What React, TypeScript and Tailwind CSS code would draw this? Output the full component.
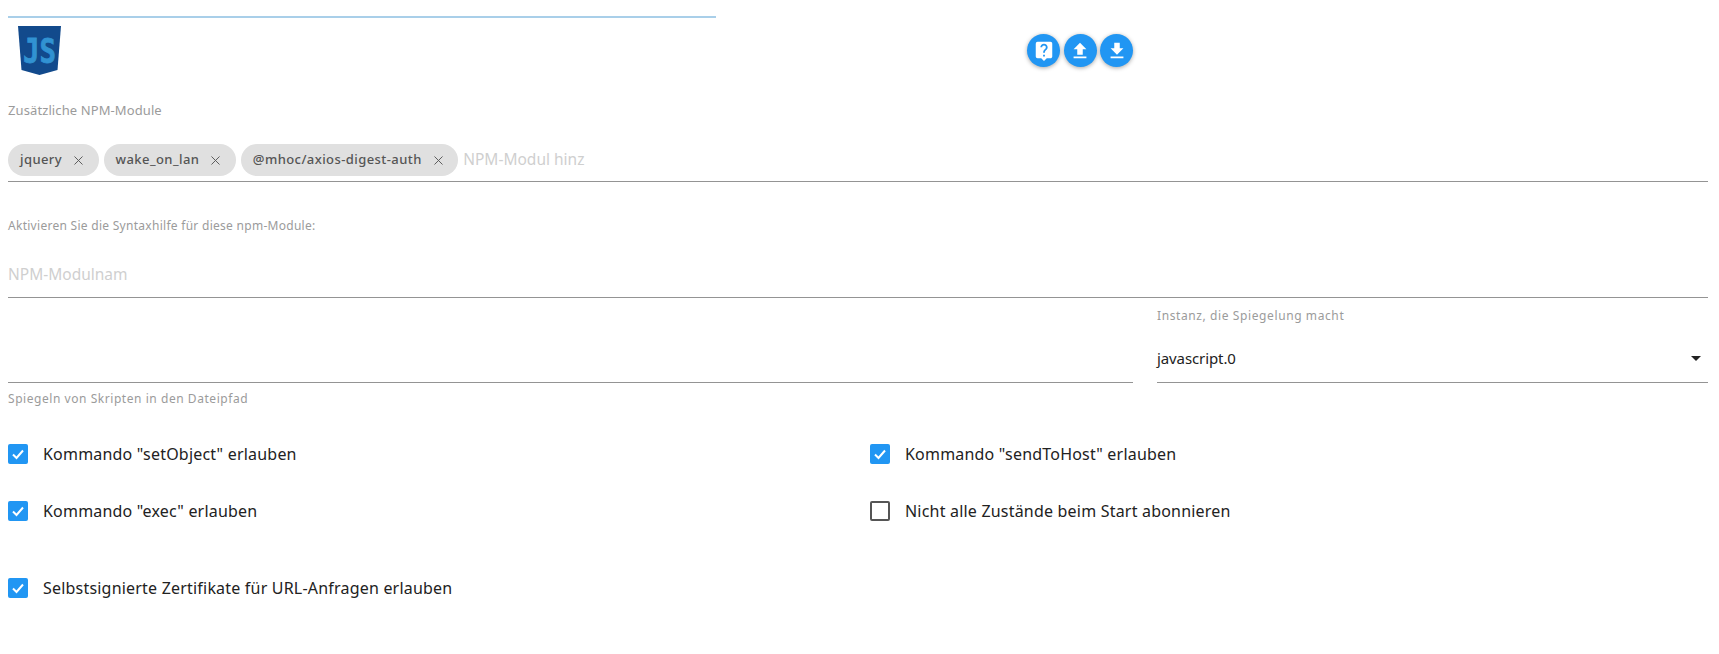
import { MdFileDownload, MdFileUpload, MdLiveHelp } from "react-icons/md";
import { X } from "lucide-react";

const font = "font-['Noto_Sans','Open_Sans',sans-serif]";

function JsLogo() {
  return (
    <svg width="46" height="50" viewBox="0 0 46 50" className="block">
      <path d="M1 0H44L40.5 44L22.5 49L4.500 44Z" fill="#124a8c" />
      <text
        x="22.5"
        y="37"
        textAnchor="middle"
        fontSize="34"
        fontWeight="700"
        fontFamily="'DejaVu Sans Mono', monospace"
        fill="#3192d2"
        stroke="#3192d2"
        strokeWidth="0.8"
        textLength="33"
        lengthAdjust="spacingAndGlyphs"
      >
        JS
      </text>
    </svg>
  );
}

function RoundButton({ children }: { children: React.ReactNode }) {
  return (
    <button className="w-[33px] h-[33px] rounded-full bg-[#2196f3] text-white flex items-center justify-center shadow-[0_1px_4px_rgba(0,0,0,0.35)]">
      {children}
    </button>
  );
}

function Chip({ label }: { label: string }) {
  return (
    <div className="h-[32px] rounded-full bg-[#e0e0e0] flex items-center pl-[12px] pr-[12.5px] gap-[9px]">
      <span className="text-[13px] font-medium text-[#555555] tracking-[0.42px]">{label}</span>
      <X size={15} strokeWidth={1.5} className="text-[#555555]" />
    </div>
  );
}

function Check({ label, checked }: { label: string; checked?: boolean }) {
  return (
    <div className="flex items-center gap-[15px] h-[20px]">
      {checked ? (
        <div className="w-[20px] h-[20px] rounded-[2px] bg-[#2196f3] flex items-center justify-center">
          <svg width="14" height="14" viewBox="0 0 14 14">
            <path d="M2 7.500L5.500 11L12 3.500" fill="none" stroke="white" strokeWidth="2" />
          </svg>
        </div>
      ) : (
        <div className="w-[20px] h-[20px] rounded-[2px] border-2 border-[#555555]" />
      )}
      <span className="text-[16px] tracking-[0.2px] text-[#222222]">{label}</span>
    </div>
  );
}

export default function App() {
  return (
    <div className={`${font} h-[654px] bg-white pl-[8px] pr-[11px] pt-[16px] overflow-hidden`}>
      <div className="w-[708px] h-[2px] bg-[#a9cfe9]" />

      <div className="flex h-[50px] mt-[8px]">
        <div className="ml-[9px]">
          <JsLogo />
        </div>
        <div className="flex gap-[3.5px] ml-[964px] mt-[8px] h-[33px]">
          <RoundButton>
            <MdLiveHelp size={22} />
          </RoundButton>
          <RoundButton>
            <MdFileUpload size={22} />
          </RoundButton>
          <RoundButton>
            <MdFileDownload size={22} />
          </RoundButton>
        </div>
      </div>

      <div className="mt-[26px] text-[13px] leading-[16px] tracking-[0.1px] text-[#9b9b9b]">Zusätzliche NPM-Module</div>
      <div className="mt-[26px] pb-[5px] border-b border-[#949494] flex items-center gap-[5px]">
        <Chip label="jquery" />
        <Chip label="wake_on_lan" />
        <Chip label="@mhoc/axios-digest-auth" />
        <span className="text-[15.5px] text-[#cfcfcf]">NPM-Modul hinz</span>
      </div>

      <div className="mt-[36px] text-[12px] leading-[16px] tracking-[0.28px] text-[#9b9b9b]">
        Aktivieren Sie die Syntaxhilfe für diese npm-Module:
      </div>
      <div className="mt-[27px] h-[37px] border-b border-[#949494] text-[15.5px] leading-[26px] text-[#cfcfcf]">
        NPM-Modulnam
      </div>

      <div className="flex gap-[24px] mt-[9px]">
        <div className="w-[1125px]">
          <div className="h-[76px] border-b border-[#949494]" />
          <div className="mt-[8px] text-[12px] leading-[16px] tracking-[0.55px] text-[#9b9b9b]">
            Spiegeln von Skripten in den Dateipfad
          </div>
        </div>
        <div className="flex-1 pt-[1px]">
          <div className="text-[12px] leading-[16px] tracking-[0.6px] text-[#9b9b9b]">
            Instanz, die Spiegelung macht
          </div>
          <div className="mt-[15px] h-[44px] border-b border-[#949494] flex items-center justify-between pr-[7px] pb-[5px]">
            <span className="text-[15px] tracking-[-0.1px] text-[#222222]">javascript.0</span>
            <span className="w-0 h-0 border-x-[5px] border-x-transparent border-t-[5px] border-t-[#222222]" />
          </div>
        </div>
      </div>

      <div className="grid grid-cols-[862px_1fr] mt-[37px] gap-y-[37px]">
        <Check checked label={'Kommando "setObject" erlauben'} />
        <Check checked label={'Kommando "sendToHost" erlauben'} />
        <Check checked label={'Kommando "exec" erlauben'} />
        <Check label="Nicht alle Zustände beim Start abonnieren" />
        <div className="col-span-2 mt-[20px]">
          <Check checked label="Selbstsignierte Zertifikate für URL-Anfragen erlauben" />
        </div>
      </div>
    </div>
  );
}
